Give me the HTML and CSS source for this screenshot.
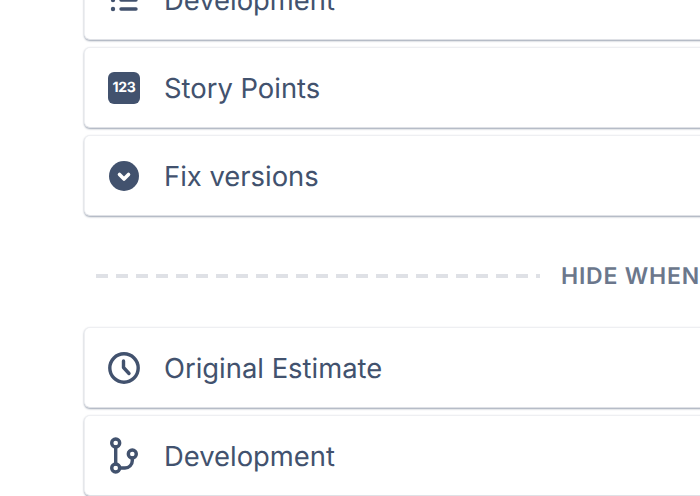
FILE: index.html
```html
<!DOCTYPE html>
<html lang="en">
<head>
<meta charset="utf-8">
<title>Fields</title>
<link rel="stylesheet" href="styles.css">
</head>
<body>
<main class="list">
  <section class="group">
    <div class="card">
      <svg class="icon" viewBox="0 0 32 32"><circle cx="5" cy="7" r="2.2" class="fill"/><circle cx="5" cy="16" r="2.2" class="fill"/><circle cx="5" cy="25" r="2.2" class="fill"/><path d="M13 7h15M13 16h15M13 25h15" class="line"/></svg>
      <span class="name">Development</span>
    </div>
    <div class="card">
      <span class="num-icon">123</span>
      <span class="name">Story Points</span>
    </div>
    <div class="card">
      <svg class="icon" viewBox="0 0 32 32"><circle cx="16" cy="16" r="15" class="fill"/><path d="M11.500 14.500l4.500 4.500 4.500-4.500" fill="none" stroke="#fff" stroke-width="3.6" stroke-linecap="round" stroke-linejoin="round"/></svg>
      <span class="name">Fix versions</span>
    </div>
  </section>
  <div class="divider"><span class="dashes"></span><span class="label">HIDE WHEN EMPTY</span></div>
  <section class="group">
    <div class="card">
      <svg class="icon" viewBox="0 0 32 32"><circle cx="16" cy="16" r="14.200" class="line"/><path d="M15.500 9v6.500L21 21.500" class="line"/></svg>
      <span class="name">Original Estimate</span>
    </div>
    <div class="card">
      <svg class="icon" viewBox="0 0 32 32"><circle cx="7.700" cy="3" r="4" class="line"/><circle cx="7.700" cy="28" r="4" class="line"/><circle cx="24.300" cy="14" r="4" class="line"/><path d="M7.700 7v17M11.700 28H17a7.300 7.300 0 0 0 7.300-7.300V18" class="line"/></svg>
      <span class="name">Development</span>
    </div>
  </section>
</main>
</body>
</html>
```
FILE: styles.css
```css
html, body {
  margin: 0;
  padding: 0;
  height: 100%;
  overflow: hidden;
  background: #fff;
}
.list {
  width: 900px;
  margin: -41px 0 0 84px;
  font-family: Inter, "Liberation Sans", sans-serif;
  text-rendering: geometricPrecision;
}
.group {
  display: flex;
  flex-direction: column;
  gap: 7px;
}
.card {
  box-sizing: border-box;
  height: 81px;
  display: flex;
  align-items: center;
  gap: 24px;
  padding: 1px 0 0 23px;
  background: #fff;
  border: 1px solid #eeeff2;
  border-bottom-color: #dfe1e6;
  border-radius: 6px;
  box-shadow: 0 1px 2px rgba(9, 30, 66, 0.4);
  color: #42526e;
  font-size: 27.4px;
  line-height: 32px;
}
.icon {
  width: 32px;
  height: 32px;
  flex: none;
  overflow: visible;
}
.fill {
  fill: #42526e;
}
.line {
  fill: none;
  stroke: #42526e;
  stroke-width: 3.4;
  stroke-linecap: round;
  stroke-linejoin: round;
}
.num-icon {
  width: 32px;
  height: 32px;
  flex: none;
  display: flex;
  align-items: center;
  justify-content: center;
  background: #42526e;
  border-radius: 6px;
  color: #fff;
  font-size: 14px;
  font-weight: 700;
  letter-spacing: -0.3px;
}
.divider {
  box-sizing: border-box;
  display: flex;
  align-items: center;
  gap: 21px;
  height: 111px;
  padding: 9px 0 0 12px;
}
.dashes {
  width: 444px;
  height: 4px;
  flex: none;
  background: repeating-linear-gradient(90deg, #dfe1e6 0 12px, transparent 12px 20px);
}
.label {
  color: #6b778c;
  font-size: 23px;
  font-weight: 600;
  letter-spacing: 0.8px;
  white-space: nowrap;
}
```
